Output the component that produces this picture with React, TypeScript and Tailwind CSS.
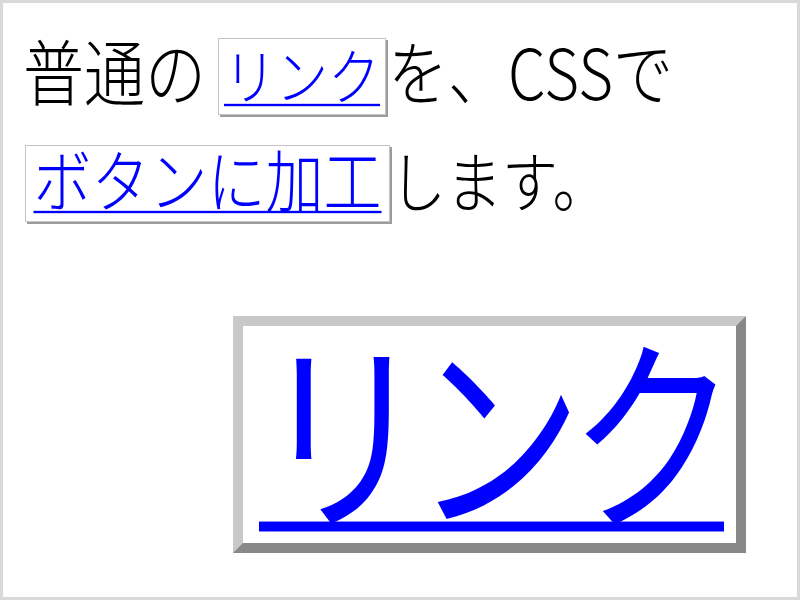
import React from "react";

const jp = "font-['Noto_Sans_CJK_JP','Noto_Sans',sans-serif]";

function LinkChip({ label, size }: { label: string; size: string }) {
  return (
    <a
      href="#"
      className="flex items-end justify-center h-[77px] pb-[9px] bg-white border border-[#c4c4c4] shadow-[2px_2px_0_#9c9c9c] text-[#0000ff] leading-none"
    >
      <span
        className={`inline-block origin-bottom scale-y-[1.17] underline decoration-[2px] underline-offset-[3px] font-light ${size}`}
      >
        {label}
      </span>
    </a>
  );
}

export default function App() {
  return (
    <div className={`w-[800px] h-[600px] bg-white border-[3px] border-[#d9d9d9] text-black ${jp}`}>
      <div className="flex items-end pl-[20px] pt-[35px] leading-none">
        <span className="inline-block origin-bottom scale-y-[1.17] text-[61px] font-light pb-[9px]">
          普通の
        </span>
        <div className="ml-[12px] w-[168px]">
          <LinkChip label="リンク" size="text-[52px]" />
        </div>
        <span className="ml-[2px] inline-block origin-bottom scale-y-[1.17] text-[60px] font-light pb-[9px]">
          を、CSSで
        </span>
      </div>

      <div className="flex items-end pl-[22px] mt-[30px] leading-none">
        <div className="w-[365px]">
          <LinkChip label="ボタンに加工" size="text-[58px]" />
        </div>
        <span className="ml-[0px] inline-block origin-bottom scale-y-[1.17] text-[56px] font-light pb-[9px]">
          します。
        </span>
      </div>

      <div className="ml-[230px] mt-[94px] w-[513px] h-[237px] border-[10px] border-t-[#c8c8c8] border-l-[#c8c8c8] border-r-[#888888] border-b-[#888888] bg-white flex items-end justify-center pb-[14px]">
        <a
          href="#"
          className="inline-block origin-bottom scale-y-[1.24] text-[168px] tracking-[-13px] leading-none text-[#0000ff] underline decoration-[8px] underline-offset-[5px] pl-[4px]"
        >
          リンク
        </a>
      </div>
    </div>
  );
}
